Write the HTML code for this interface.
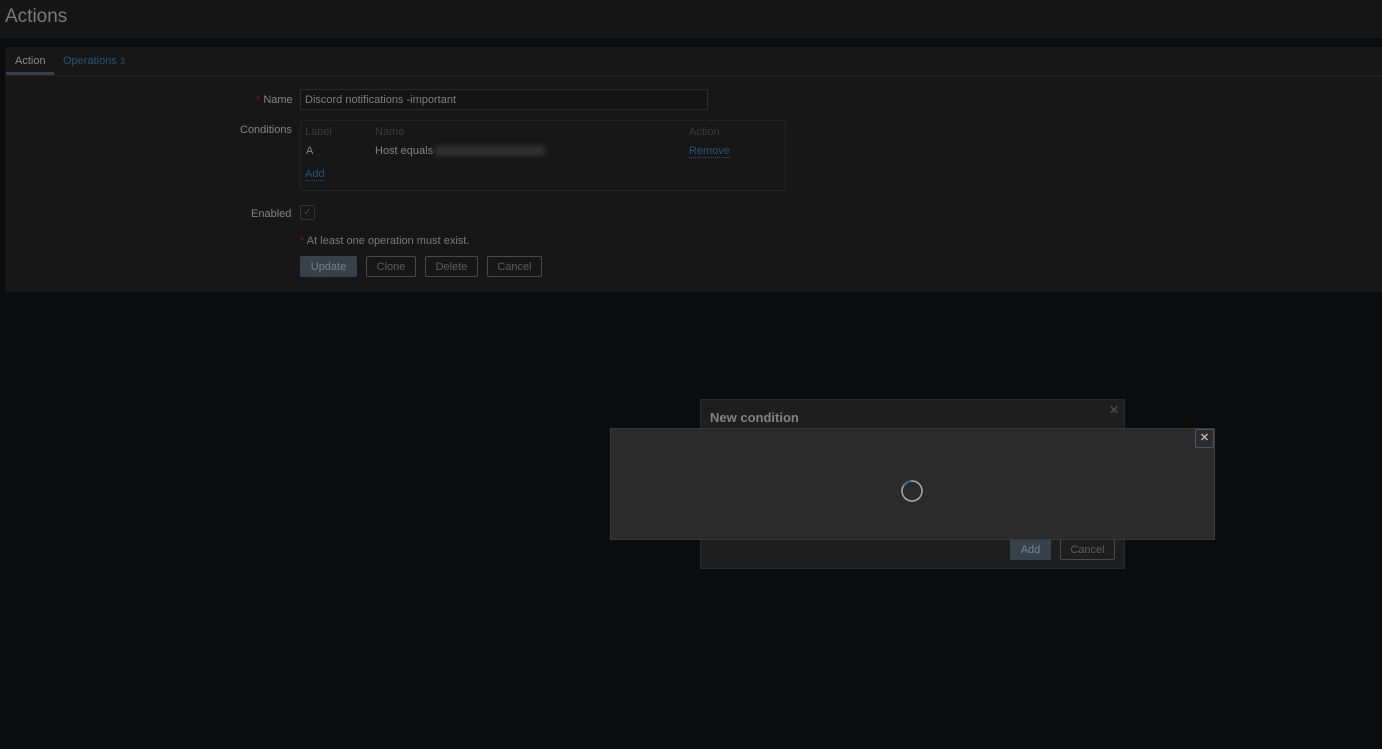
<!DOCTYPE html>
<html><head><style>
*{box-sizing:border-box;margin:0;padding:0}
body{width:1382px;height:749px;background:#0b0c0e;font-family:"Liberation Sans",sans-serif;font-size:11px;color:#858585;position:relative;overflow:hidden}
.a{position:absolute}
.btn{position:absolute;height:21px;border:1px solid #4a4a4a;border-radius:2px;color:#5c5c5c;text-align:center;line-height:20px;font-size:11px}
</style></head><body>
<div class="a" style="left:0;top:0;width:1382px;height:38px;background:#161616"></div>
<div class="a" style="left:5px;top:6px;font-size:19px;color:#7a7a7a">Actions</div>
<div class="a" style="left:5px;top:47px;width:1377px;height:245px;background:#171717"></div>
<div class="a" style="left:5px;top:75px;width:1377px;height:1px;background:#222"></div>
<div class="a" style="left:6px;top:72px;width:48px;height:3px;background:#3a4048"></div>
<div class="a" style="left:15px;top:55px;color:#8a8a8a">Action</div>
<div class="a" style="left:63px;top:55px;color:#2a5372">Operations <span style="font-size:9px">3</span></div>
<div class="a" style="left:256px;top:94px"><span style="color:#6b2020">*</span> Name</div>
<div class="a" style="left:300px;top:89px;width:408px;height:21px;background:#141414;border:1px solid #2c2c2c"></div>
<div class="a" style="left:305px;top:94px;color:#7e7e7e">Discord notifications -important</div>
<div class="a" style="left:240px;top:124px">Conditions</div>
<div class="a" style="left:300px;top:120px;width:486px;height:71px;border:1px solid #222"></div>
<div class="a" style="left:305px;top:126px;color:#3c3c3c">Label</div>
<div class="a" style="left:375px;top:126px;color:#3c3c3c">Name</div>
<div class="a" style="left:689px;top:126px;color:#3c3c3c">Action</div>
<div class="a" style="left:306px;top:145px">A</div>
<div class="a" style="left:375px;top:145px">Host equals</div>
<div class="a" style="left:435px;top:146px;width:110px;height:10px;background:#333;filter:blur(3px)"></div>
<div class="a" style="left:689px;top:145px;color:#2a5372;border-bottom:1px dotted #2a5372">Remove</div>
<div class="a" style="left:305px;top:168px;color:#2a5372;border-bottom:1px dotted #2a5372">Add</div>
<div class="a" style="left:251px;top:208px">Enabled</div>
<div class="a" style="left:300px;top:205px;width:15px;height:15px;border:1px solid #333;border-radius:2px;color:#3a4a58;font-size:10px;text-align:center;line-height:13px">✓</div>
<div class="a" style="left:300px;top:235px;color:#7a7a7a"><span style="color:#6b2020">*</span> At least one operation must exist.</div>
<div class="btn" style="left:300px;top:256px;width:57px;background:#38414a;border-color:#38414a;color:#7a8088">Update</div>
<div class="btn" style="left:366px;top:256px;width:50px">Clone</div>
<div class="btn" style="left:425px;top:256px;width:53px">Delete</div>
<div class="btn" style="left:487px;top:256px;width:55px">Cancel</div>

<div class="a" style="left:700px;top:399px;width:425px;height:170px;background:#1e1e1e;border:1px solid #2a2a2a"></div>
<div class="a" style="left:710px;top:410px;font-size:13px;font-weight:bold;color:#828282">New condition</div>
<div class="a" style="left:1109px;top:403px;color:#4a4a4a;font-size:12px;font-weight:bold">✕</div>
<div class="btn" style="left:1010px;top:539px;width:41px;background:#35414c;border-color:#35414c;color:#7a8592">Add</div>
<div class="btn" style="left:1060px;top:539px;width:55px">Cancel</div>

<div class="a" style="left:610px;top:428px;width:605px;height:112px;background:#2b2b2b;border:1px solid #3a3a3a"></div>
<div class="a" style="left:1195px;top:429px;width:19px;height:19px;border:1px solid #3f5a72;border-radius:2px;color:#b0b0b0;text-align:center;line-height:17px;font-weight:bold;font-size:11px">✕</div>
<svg class="a" style="left:900px;top:479px" width="24" height="24"><circle cx="12" cy="12" r="10" fill="none" stroke="#aaa" stroke-width="1.5"/><path d="M4 7 A10 10 0 0 1 11 2" fill="none" stroke="#2a6fa8" stroke-width="1.8"/></svg>
</body></html>
